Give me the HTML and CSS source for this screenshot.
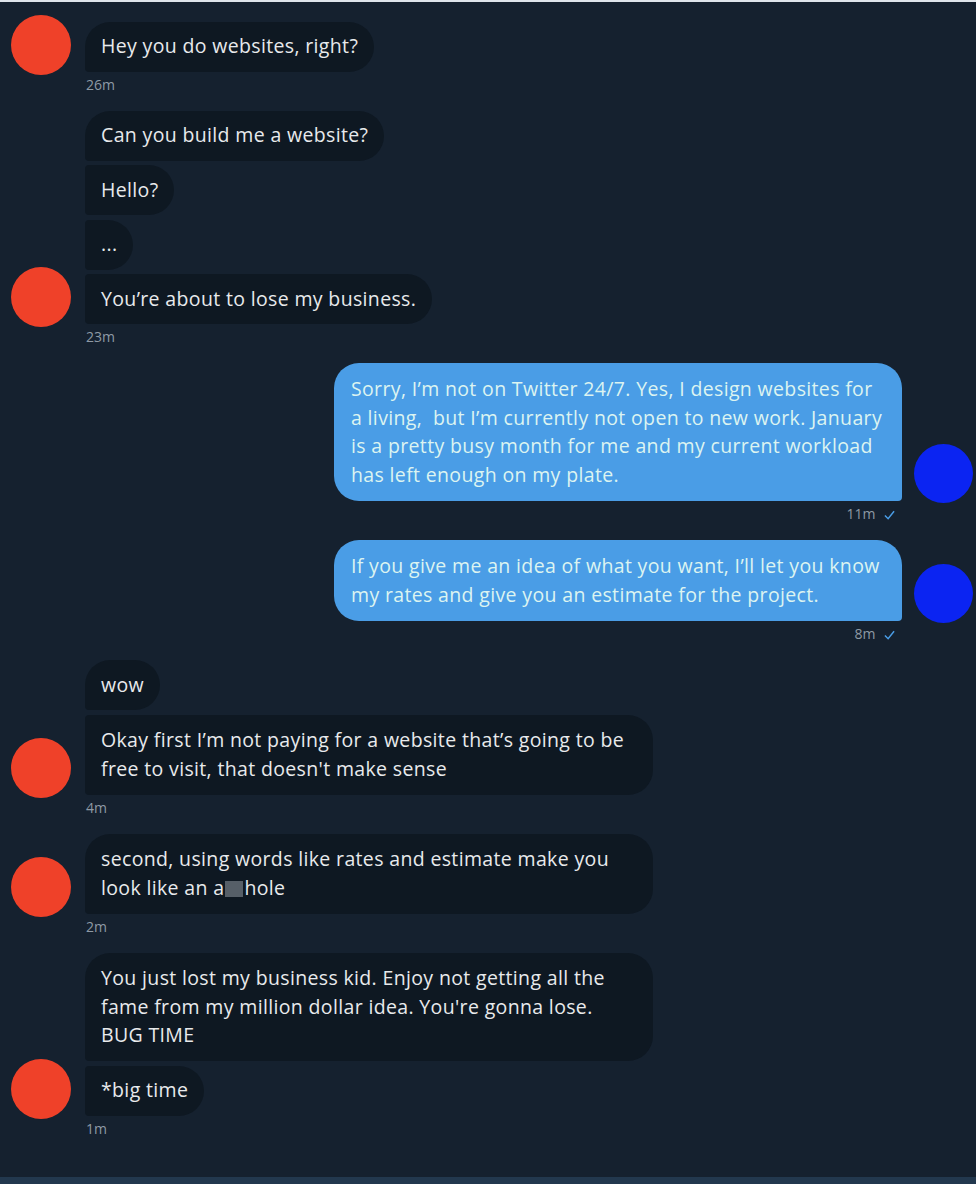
FILE: index.html
```html
<!DOCTYPE html>
<html>
<head>
  <title>Messages</title>
  <link rel="stylesheet" href="styles.css">
</head>
<body>

<div class="page">
  <div class="chat">

    <div class="group in">
      <div class="row">
        <div class="avatar red"></div>
        <div class="bubbles">
          <div class="bubble">Hey you do websites, right?</div>
        </div>
      </div>
      <div class="time">26m</div>
    </div>

    <div class="group in">
      <div class="row">
        <div class="avatar red"></div>
        <div class="bubbles">
          <div class="bubble">Can you build me a website?</div>
          <div class="bubble">Hello?</div>
          <div class="bubble">...</div>
          <div class="bubble">You’re about to lose my business.</div>
        </div>
      </div>
      <div class="time">23m</div>
    </div>

    <div class="group out">
      <div class="row">
        <div class="bubbles">
          <div class="bubble wide">Sorry, I’m not on Twitter 24/7. Yes, I design websites for<br>a living,&nbsp; but I’m currently not open to new work. January<br>is a pretty busy month for me and my current workload<br>has left enough on my plate.</div>
        </div>
        <div class="avatar blue"></div>
      </div>
      <div class="time">11m <svg class="check" viewBox="0 0 12 10"><polyline points="1,5.5 4.5,9 11,1"/></svg></div>
    </div>

    <div class="group out">
      <div class="row">
        <div class="bubbles">
          <div class="bubble wide">If you give me an idea of what you want, I’ll let you know<br>my rates and give you an estimate for the project.</div>
        </div>
        <div class="avatar blue"></div>
      </div>
      <div class="time">8m <svg class="check" viewBox="0 0 12 10"><polyline points="1,5.5 4.5,9 11,1"/></svg></div>
    </div>

    <div class="group in">
      <div class="row">
        <div class="avatar red"></div>
        <div class="bubbles">
          <div class="bubble">wow</div>
          <div class="bubble wide">Okay first I’m not paying for a website that’s going to be<br>free to visit, that doesn't make sense</div>
        </div>
      </div>
      <div class="time">4m</div>
    </div>

    <div class="group in">
      <div class="row">
        <div class="avatar red"></div>
        <div class="bubbles">
          <div class="bubble wide">second, using words like rates and estimate make you<br>look like an a<span class="censor"></span>hole</div>
        </div>
      </div>
      <div class="time">2m</div>
    </div>

    <div class="group in">
      <div class="row">
        <div class="avatar red"></div>
        <div class="bubbles">
          <div class="bubble wide">You just lost my business kid. Enjoy not getting all the<br>fame from my million dollar idea. You're gonna lose.<br>BUG TIME</div>
          <div class="bubble">*big time</div>
        </div>
      </div>
      <div class="time">1m</div>
    </div>

  </div>
  <div class="footer"></div>
</div>

</body>
</html>
```

FILE: styles.css
```css
body {
  margin: 0;
  background-color: #15212f;
  font-family: "Open Sans", "Noto Sans", sans-serif;
  overflow: hidden;
}
.page {
  min-height: 100vh;
  display: flex;
  flex-direction: column;
  border-top: 2px solid #dfe5eb;
  box-sizing: border-box;
}
.chat {
  flex: 1;
  padding: 12.5px 3px 0 11px;
}
.group {
  margin-bottom: 17px;
}
.row {
  display: flex;
  align-items: flex-end;
  gap: 14px;
}
.bubbles {
  display: flex;
  flex-direction: column;
  align-items: flex-start;
  gap: 4.5px;
}
.bubble {
  font-size: 19.5px;
  letter-spacing: 0.35px;
  line-height: 28.5px;
  padding: 10.75px 16px;
  color: #e8eaec;
  background-color: #0e1822;
  border-radius: 4px 25px 25px 4px;
  white-space: nowrap;
}
.in .bubble:first-child {
  border-top-left-radius: 25px;
}
.bubble.wide {
  width: 568px;
  box-sizing: border-box;
  padding-top: 11.5px;
  padding-bottom: 11.5px;
}
.avatar {
  width: 60px;
  height: 60px;
  border-radius: 50%;
  flex-shrink: 0;
  margin-bottom: -3px;
}
.avatar.red {
  background-color: #ef4129;
}
.avatar.blue {
  width: 59px;
  height: 59px;
  background-color: #0b24f2;
  margin-bottom: -2px;
}
.out .row {
  justify-content: flex-end;
  gap: 12px;
}
.out .bubbles {
  align-items: flex-end;
}
.out .bubble {
  background-color: #4a9de6;
  color: #dcf4f1;
  padding: 12px 17px;
  border-radius: 25px 25px 4px 25px;
}
.time {
  font-size: 14px;
  line-height: 18px;
  margin-top: 4px;
  color: #8e9aa5;
  padding-left: 75px;
}
.out .time {
  padding-left: 0;
  padding-right: 78px;
  text-align: right;
}
.check {
  width: 11px;
  height: 10px;
  margin-left: 5px;
  vertical-align: -1px;
}
.check polyline {
  fill: none;
  stroke: #4a9de6;
  stroke-width: 1.6;
}
.censor {
  display: inline-block;
  width: 18px;
  height: 16px;
  margin: 0 1px;
  background-color: #565f68;
  vertical-align: -2px;
}
.footer {
  height: 7px;
  background-color: #22384e;
}
```
